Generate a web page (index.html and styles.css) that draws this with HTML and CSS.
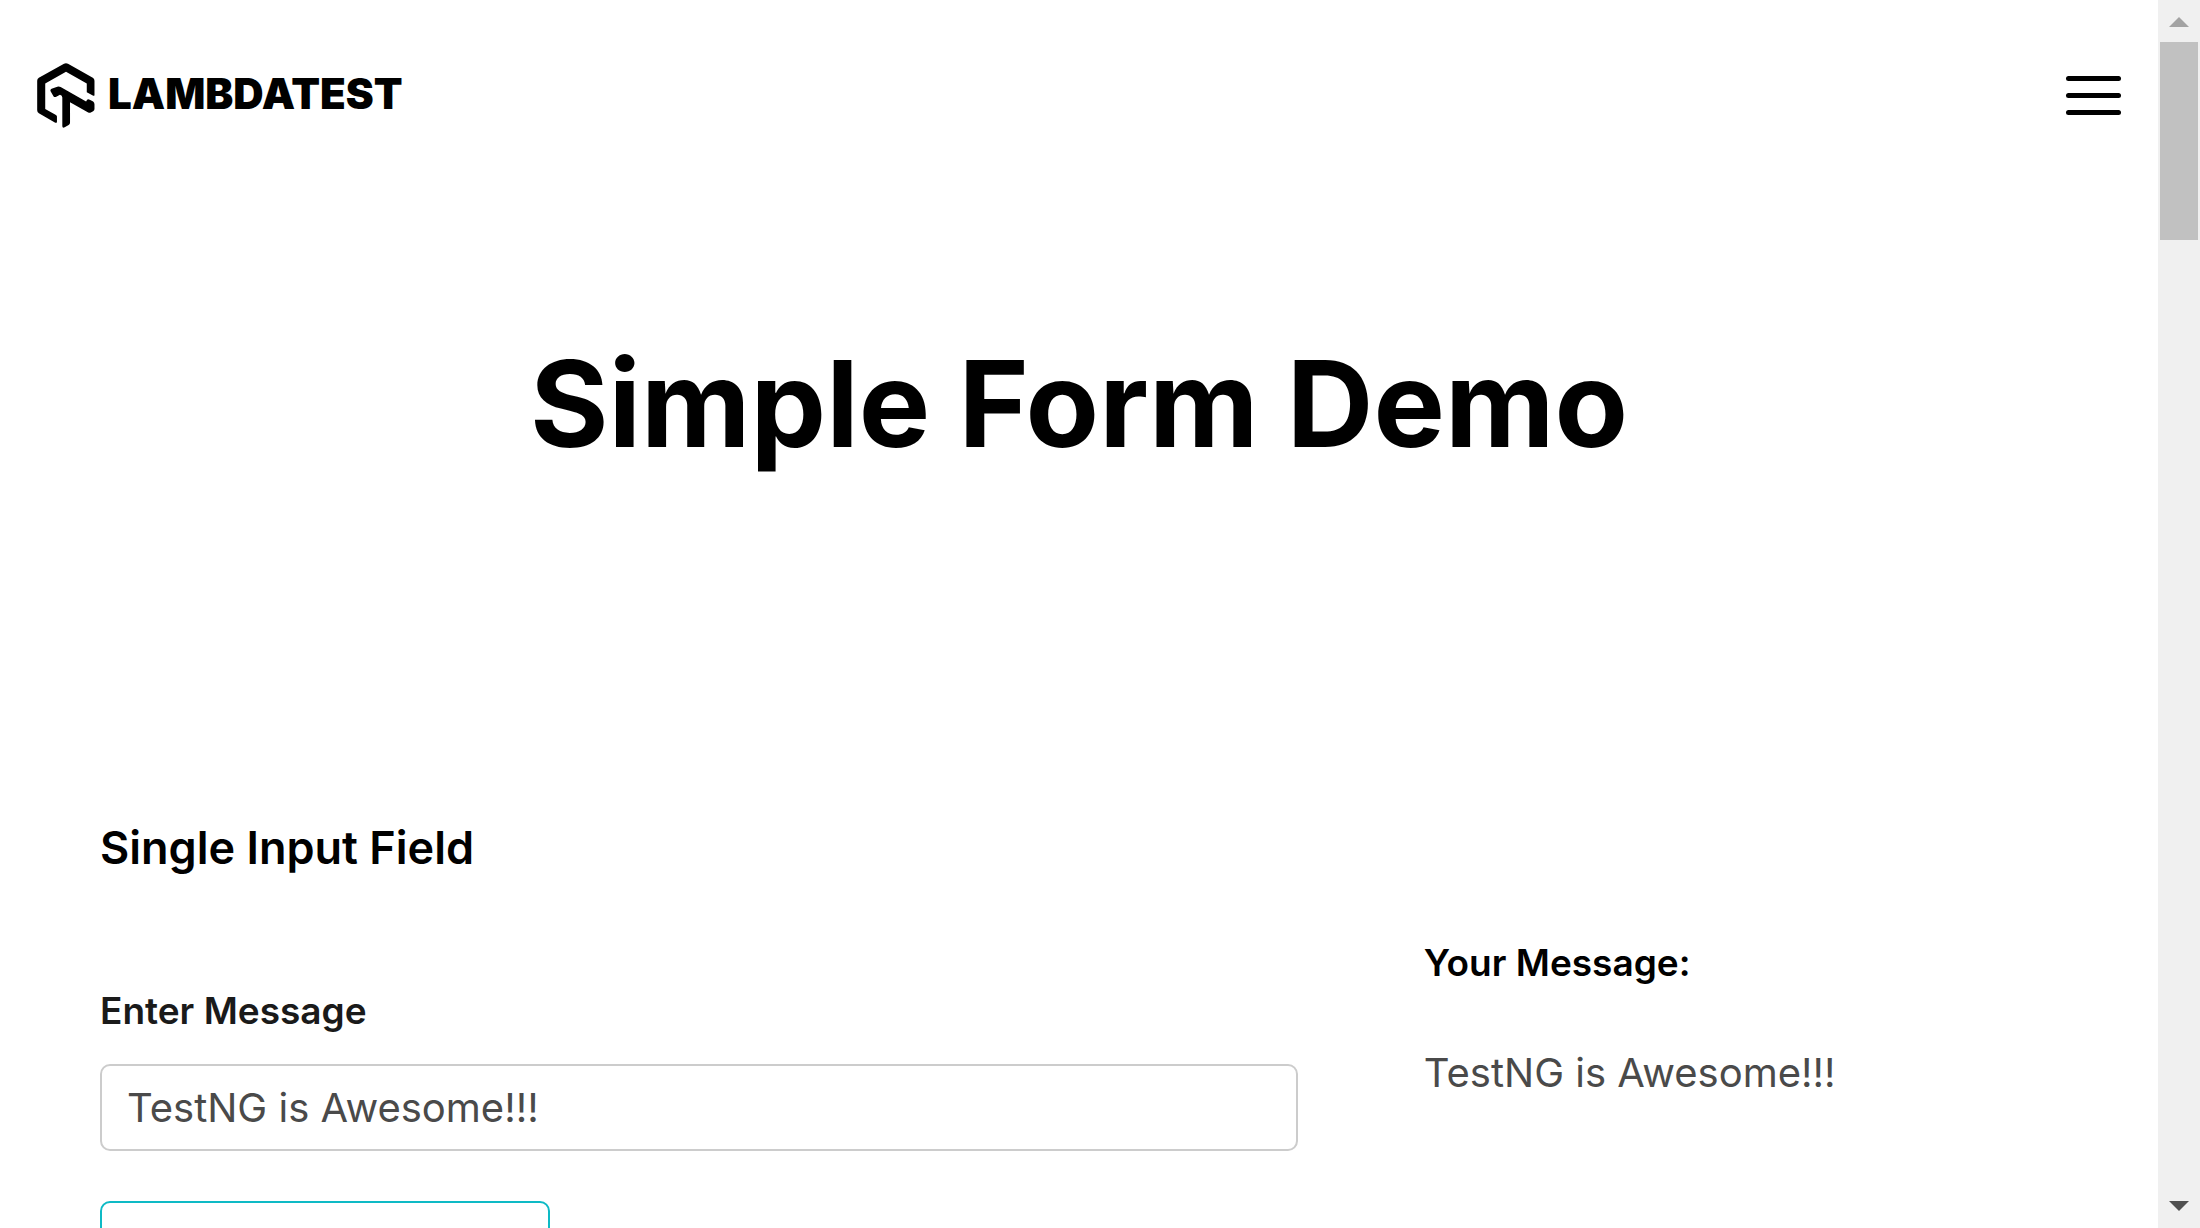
FILE: index.html
```html
<!DOCTYPE html>
<html lang="en">
<head>
<meta charset="utf-8">
<meta name="viewport" content="width=device-width, initial-scale=1">
<title>Simple Form Demo</title>
<link rel="stylesheet" href="styles.css">
</head>
<body>
<div class="window">
  <div class="page">
    <header class="header">
      <a class="brand" href="#" aria-label="LambdaTest home">
        <svg class="brand-mark" viewBox="0 0 172 194" aria-hidden="true">
          <path d="M80 2Q86-1 92 2L166 44Q171 47 171 53V96Q170 99 166 97L148 87V61L86 26 24 61V137L56 155Q59 157 59 160V176Q58 180 54 178L5 150Q0 147 0 141V53Q0 47 5 44Z"/>
          <path d="M40 84Q38 80 43 77L60 71Q65 69 70 72L146 115 149 110Q152 107 157 110L167 115Q171 118 171 123V137Q171 141 167 144L160 148Q156 150 151 147L98 117V178Q98 182 94 185L82 192Q75 195 75 188V103Q75 97 68 95L57 101Q52 103 49 100Z"/>
        </svg>
        <span class="brand-name">LAMBDATEST</span>
      </a>
      <button class="menu-button" type="button" aria-label="Open menu">
        <span class="menu-bar"></span>
        <span class="menu-bar"></span>
        <span class="menu-bar"></span>
      </button>
    </header>
    <h1 class="title">Simple Form Demo</h1>
    <main class="content">
      <h2 class="section-title">Single Input Field</h2>
      <div class="columns">
        <form class="form">
          <label class="label" for="message">Enter Message</label>
          <input class="field" id="message" type="text" value="TestNG is Awesome!!!">
          <button class="submit" type="button" aria-label="Submit message"></button>
        </form>
        <section class="result">
          <h3 class="result-title">Your Message:</h3>
          <p class="result-text">TestNG is Awesome!!!</p>
        </section>
      </div>
    </main>
  </div>
  <div class="scrollbar" aria-hidden="true">
    <svg class="arrow arrow-up" viewBox="0 0 20 10"><path d="M0 10L10 0 20 10Z"/></svg>
    <div class="track"><div class="thumb"></div></div>
    <svg class="arrow arrow-down" viewBox="0 0 20 10"><path d="M0 0L10 10 20 0Z"/></svg>
  </div>
</div>
</body>
</html>
```
FILE: styles.css
```css
* {
  box-sizing: border-box;
}

body,
h1,
h2,
h3,
p {
  margin: 0;
}

body {
  background: #fff;
  color: #000;
  font-family: Inter, "Liberation Sans", sans-serif;
}

.window {
  display: flex;
  height: 100vh;
  overflow: hidden;
}

.page {
  flex: 1;
  min-width: 0;
  overflow: hidden;
}

.header {
  display: flex;
  align-items: center;
  justify-content: space-between;
  height: 190px;
  padding: 0 37px;
}

.brand {
  display: flex;
  align-items: center;
  gap: 13px;
  color: #000;
  text-decoration: none;
}

.brand-mark {
  width: 58px;
  height: 65px;
}

.brand-name {
  padding-bottom: 2px;
  font-size: 42px;
  line-height: 48px;
  font-weight: 900;
}

.menu-button {
  display: flex;
  flex-direction: column;
  gap: 12px;
  width: 55px;
  padding: 0;
  border: 0;
  background: none;
}

.menu-bar {
  height: 5px;
  border-radius: 3px;
  background: #000;
}

.title {
  padding: 140px 0;
  font-size: 120px;
  line-height: 148px;
  font-weight: 700;
  text-align: center;
}

.content {
  padding: 200px 100px 0;
}

.section-title {
  font-size: 45px;
  line-height: 60px;
  font-weight: 600;
}

.columns {
  display: grid;
  grid-template-columns: 17fr 9fr;
  gap: 126px;
  padding-top: 60px;
}

.form {
  display: flex;
  flex-direction: column;
  align-items: flex-start;
  padding-top: 48px;
}

.label {
  margin-bottom: 28px;
  color: #1a1a1a;
  font-size: 37px;
  line-height: 50px;
  font-weight: 600;
}

.field {
  width: 100%;
  height: 87px;
  margin-bottom: 50px;
  padding: 0 25px;
  border: 2px solid #ccc;
  border-radius: 10px;
  background: #fff;
  color: #4a4a4a;
  font: 400 40px/50px Inter, "Liberation Sans", sans-serif;
}

.submit {
  width: 450px;
  height: 90px;
  border: 2px solid #0ebac5;
  border-radius: 10px;
  background: #fff;
}

.result-title {
  margin-bottom: 60px;
  font-size: 37px;
  line-height: 50px;
  font-weight: 600;
}

.result-text {
  color: #4a4a4a;
  font-size: 40px;
  line-height: 50px;
  font-weight: 400;
}

.scrollbar {
  display: flex;
  flex-direction: column;
  align-items: center;
  width: 42px;
  padding: 17px 2px;
  background: #f0f0f0;
}

.arrow {
  flex: none;
  width: 20px;
  height: 10px;
}

.arrow-up {
  fill: #a3a3a3;
}

.arrow-down {
  fill: #505050;
}

.track {
  flex: 1;
  width: 100%;
  padding: 15px 0;
}

.thumb {
  height: 198px;
  background: #c1c1c1;
}
```
